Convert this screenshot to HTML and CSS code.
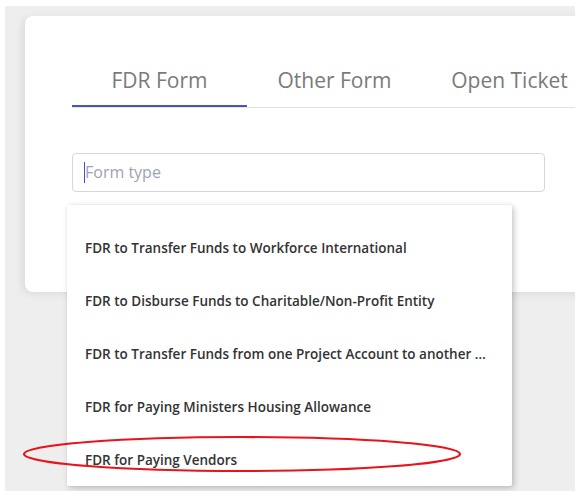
FILE: index.html
```html
<!DOCTYPE html>
<html lang="en">
<head>
<meta charset="utf-8">
<title>FDR Form</title>
<link rel="stylesheet" href="styles.css">
</head>
<body>
  <div class="backdrop">
    <section class="card">
      <nav class="tabs">
        <div class="tab tab-active">FDR Form</div>
        <div class="tab">Other Form</div>
        <div class="tab">Open Ticket</div>
      </nav>

      <div class="field-wrap">
        <div class="field">
          <span class="caret"></span>
          <span class="placeholder">Form type</span>
        </div>

        <ul class="menu">
          <li class="menu-item">FDR to Transfer Funds to Workforce International</li>
          <li class="menu-item">FDR to Disburse Funds to Charitable/Non-Profit Entity</li>
          <li class="menu-item">FDR to Transfer Funds from one Project Account to another …</li>
          <li class="menu-item">FDR for Paying Ministers Housing Allowance</li>
          <li class="menu-item">FDR for Paying Vendors</li>
        </ul>
      </div>
    </section>
  </div>

  <!-- hand-drawn highlight round the vendor option -->
  <svg class="highlight" width="446" height="42" viewBox="0 0 446 42" aria-hidden="true">
    <ellipse cx="222" cy="20" rx="218" ry="17" fill="none" stroke="#e8141b" stroke-width="2.2"/>
  </svg>
</body>
</html>
```

FILE: styles.css
```css
* {
  box-sizing: border-box;
}

html,
body {
  margin: 0;
  padding: 0;
  width: 575px;
  height: 491px;
  overflow: hidden;
  background: #ffffff;
  font-family: "Open Sans", "Noto Sans", "DejaVu Sans", sans-serif;
}

body {
  position: relative;
}

.backdrop {
  margin: 6px 0 0 5px;
  height: 485px;
  padding: 10px 0 0 20px;
  background: #eeeeee;
}

.card {
  width: 620px;
  height: 276px;
  padding: 43px 0 0 47px;
  background: #ffffff;
  border-radius: 8px 0 0 8px;
  box-shadow: -3px 2px 8px rgba(0, 0, 0, 0.08);
}

/* tab strip */
.tabs {
  display: flex;
  border-bottom: 1px solid #e2e2e2;
}

.tab {
  width: 175px;
  height: 48px;
  flex: none;
  display: flex;
  align-items: center;
  justify-content: center;
  padding-bottom: 6px;
  font-size: 21px;
  color: #7a7a7a;
  white-space: nowrap;
}

.tab-active {
  box-shadow: inset 0 -2px 0 #4556b8;
}

/* form type select */
.field-wrap {
  position: relative;
  margin-top: 45px;
  width: 473px;
}

.field {
  height: 39px;
  border: 1px solid #d4d7df;
  border-radius: 4px;
  display: flex;
  align-items: center;
  padding: 0 0 2px 11px;
  font-size: 16px;
}

.caret {
  width: 1px;
  height: 21px;
  margin-top: 2px;
  background: #3f51d0;
  flex: none;
}

.placeholder {
  color: #9ea3b0;
}

.menu {
  position: absolute;
  top: 52px;
  left: -5px;
  width: 445px;
  height: 281px;
  margin: 0;
  padding: 17px 0 0;
  list-style: none;
  background: #ffffff;
  border-radius: 2px;
  box-shadow: 2px 2px 6px rgba(0, 0, 0, 0.22), 0 0 2px rgba(0, 0, 0, 0.08);
  overflow: hidden;
}

.menu-item {
  height: 53px;
  padding: 0 20px 0 18px;
  line-height: 53px;
  font-size: 13.5px;
  font-weight: 600;
  color: #333333;
  white-space: nowrap;
  overflow: hidden;
  text-overflow: ellipsis;
}

/* annotation overlay */
.highlight {
  position: absolute;
  left: 20px;
  top: 434px;
}
```
